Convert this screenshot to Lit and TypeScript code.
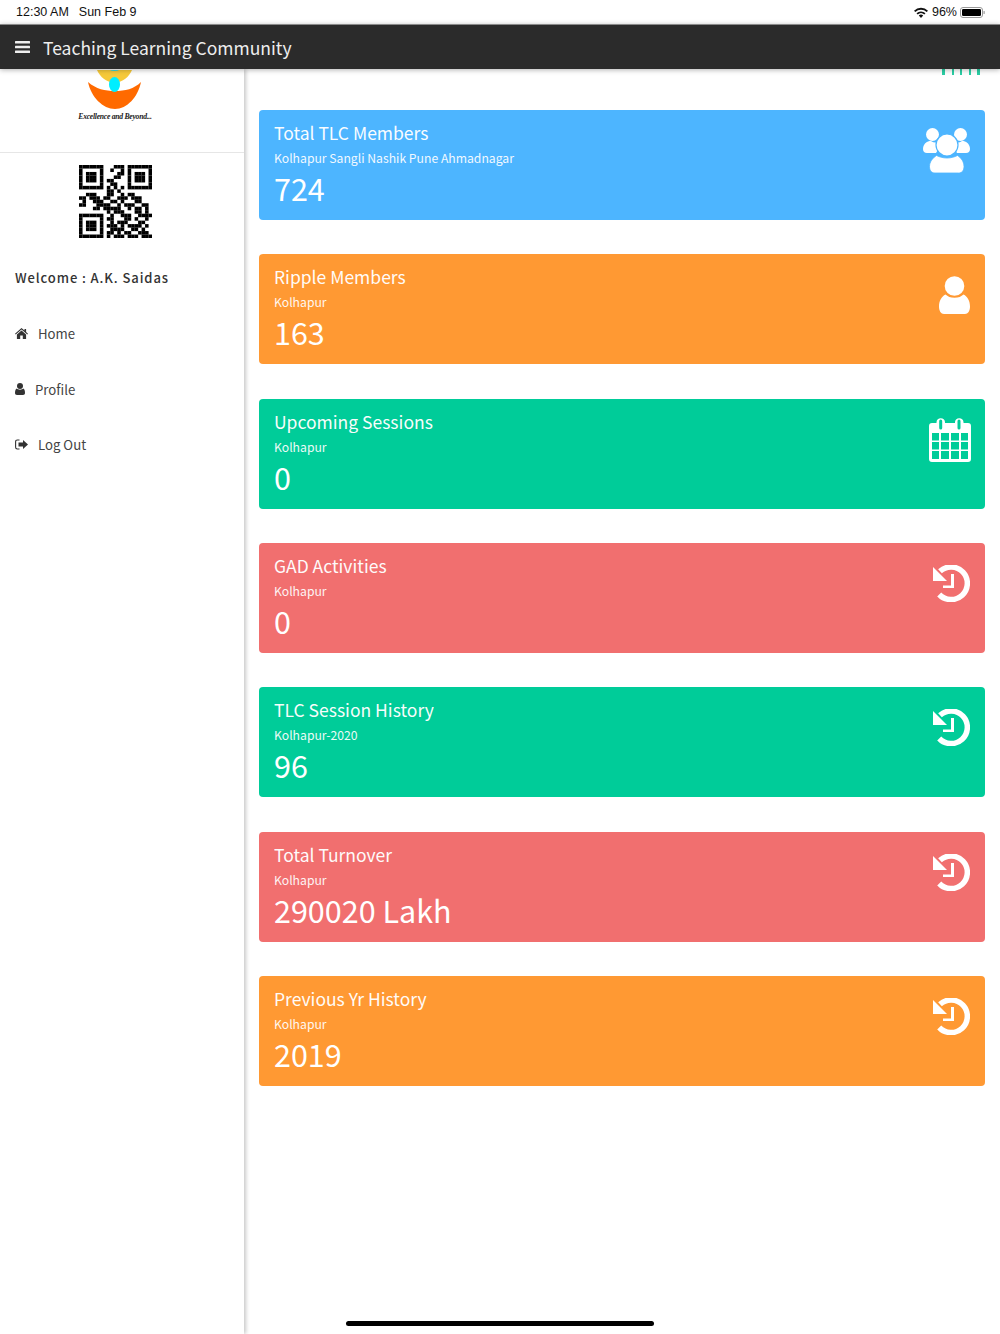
import { LitElement, html, css, svg } from "lit";
import { customElement } from "lit/decorators.js";

const QR = [
  "111111100011101111111",
  "100000100100101000001",
  "101110100001101011101",
  "101110100011001011101",
  "101110101100001011101",
  "100000100110001000001",
  "111111101010101111111",
  "000000001101000000000",
  "001110001100101100000",
  "110111011001110111000",
  "010011100110100011000",
  "110001111001011100110",
  "000011011111001011010",
  "000000001011100011010",
  "111111100100111001111",
  "100000101100011010010",
  "101110100101110001100",
  "101110101110101111010",
  "101110100111100110100",
  "100000101101011001110",
  "111111101011101110111",
];

const usersIcon = html`<svg class="icon" style="width:47px;height:45px" viewBox="0 0 47 45" fill="#fff">
  <circle cx="9.500" cy="6.500" r="6.500"/><circle cx="37.500" cy="6.500" r="6.500"/>
  <path d="M2 15.500c2-2 4-2.500 6-2.500 3 2 6 2 9 0l2 2-6 10H4c-2.500 0-4-1.500-4-4 0-2 .8-4 2-5.500zM45 15.500c-2-2-4-2.500-6-2.500-3 2-6 2-9 0l-2 2 6 10h9c2.500 0 4-1.500 4-4 0-2-.8-4-2-5.500z"/>
  <circle cx="24" cy="17" r="11" stroke="#4db5ff" stroke-width="1.200"/>
  <path d="M13.500 27.500c3 1.500 6.500 2.500 10.500 2.500s7.500-1 10.500-2.500c4 2.500 6.500 6.500 6.500 11 0 4-2 6.500-5.500 6.500H12c-3.500 0-5.500-2.500-5.500-6.500 0-4.500 3-8.500 7-11z" stroke="#4db5ff" stroke-width="0.800"/>
</svg>`;

const userIcon = html`<svg class="icon" style="width:31px;height:38px" viewBox="0 0 31 38" fill="#fff">
  <circle cx="15.500" cy="10" r="9.800"/>
  <path d="M6.500 18.500c2.200 2 5 3.300 9 3.300s6.800-1.300 9-3.300c4 2 6.500 6.500 6.500 12 0 4.500-2 7.500-5 7.500H5c-3 0-5-3-5-7.500 0-5.500 2.500-10 6.500-12z"/>
</svg>`;

const calendarIcon = html`<svg class="icon cal" style="width:42px;height:45px" viewBox="0 0 42 45">
  <path fill="#fff" fill-rule="evenodd" d="M3 6h4.500V5a4.300 4.300 0 0 1 8.500 0v1h10V5a4.300 4.300 0 0 1 8.500 0v1H39a3 3 0 0 1 3 3v33a3 3 0 0 1-3 3H3a3 3 0 0 1-3-3V9a3 3 0 0 1 3-3z
  M10.200 4v7a1.500 1.500 0 0 0 3 0V4a1.500 1.500 0 0 0-3 0zM28.500 4v7a1.500 1.500 0 0 0 3 0V4a1.500 1.500 0 0 0-3 0z
  M3 16v7.500h7V16zM12 16v7.500h8V16zM22 16v7.500h8V16zM32 16v7.500h7V16zM3 25v7.500h7V25zM12 25v7.500h8V25zM22 25v7.500h8V25zM32 25v7.500h7V25zM3 34v8h7v-8zM12 34v8h8v-8zM22 34v8h8v-8zM32 34v8h7v-8z"/>
</svg>`;

const historyIcon = html`<svg class="icon" style="width:38px;height:37px" viewBox="0 0 38 37">
  <path fill="none" stroke="#fff" stroke-width="5.500" d="M8 6.300A16.300 16.300 0 1 1 7.200 29.500"/>
  <path fill="#fff" d="M1 2V16H15z"/>
  <path fill="#fff" d="M19 9h3v14H11v-2.500h8z"/>
</svg>`;

const CARDS = [
  { t: "Total TLC Members", s: "Kolhapur Sangli Nashik Pune Ahmadnagar", v: "724", c: "blue", i: usersIcon, p: "top18" },
  { t: "Ripple Members", s: "Kolhapur", v: "163", c: "orange", i: userIcon, p: "top22" },
  { t: "Upcoming Sessions", s: "Kolhapur", v: "0", c: "green", i: calendarIcon, p: "top18" },
  { t: "GAD Activities", s: "Kolhapur", v: "0", c: "red", i: historyIcon, p: "top22" },
  { t: "TLC Session History", s: "Kolhapur-2020", v: "96", c: "green", i: historyIcon, p: "top22" },
  { t: "Total Turnover", s: "Kolhapur", v: "290020 Lakh", c: "red", i: historyIcon, p: "top22" },
  { t: "Previous Yr History", s: "Kolhapur", v: "2019", c: "orange", i: historyIcon, p: "top22" },
];

@customElement("app-root")
export class AppRoot extends LitElement {
  static styles = css`
    :host {
      display: block;
      position: relative;
      height: 1334px;
      overflow: hidden;
      background: #fff;
      font-family: "Noto Sans CJK SC", "Noto Sans CJK JP", sans-serif;
      color: #333;
    }
    .status {
      height: 24px;
      display: flex;
      align-items: center;
      padding: 0 15px 0 16px;
      font: 12.500px/24px "Liberation Sans", Arial, sans-serif;
      color: #111;
      background: #fff;
    }
    .status .date { margin-left: 10px; }
    .status .right { margin-left: auto; display: flex; align-items: center; gap: 3px; }
    .status .wifi { margin-right: 1px; }
    .battery { display: flex; align-items: center; }
    .header {
      position: relative;
      z-index: 2;
      height: 45px;
      box-sizing: border-box;
      border-top: 1px solid #8a8a8a;
      background: #2b2b2b;
      color: #eee;
      display: flex;
      align-items: center;
      padding-left: 15px;
      gap: 13px;
      font-size: 17.500px;
      box-shadow: 0 1px 5px rgba(0, 0, 0, 0.3);
    }
    .burger { display: block; }
    .body { display: flex; height: 1265px; }
    .side {
      width: 244px;
      flex: none;
      position: relative;
      z-index: 1;
      background: #fff;
      box-shadow: 2px 0 4px rgba(0, 0, 0, 0.22);
    }
    .logo {
      height: 84px;
      box-sizing: border-box;
      border-bottom: 1px solid #e6e6e6;
      padding: 1px 14px 0 0;
      display: flex;
      flex-direction: column;
      align-items: center;
    }
    .logo svg { display: block; }
    .tag {
      font: italic bold 7.700px/12px "Liberation Serif", serif;
      color: #222;
      letter-spacing: -0.28px;
      margin-top: 1px;
    }
    .qr { display: flex; justify-content: flex-start; padding: 12px 0 0 79px; }
    .welcome {
      margin-top: 28px;
      padding-left: 15px;
      font-size: 13px;
      line-height: 24px;
      font-weight: 500;
      letter-spacing: 0.9px;
      color: #333;
    }
    .nav { margin-top: 16px; display: flex; flex-direction: column; }
    .item {
      height: 55.500px;
      display: flex;
      align-items: center;
      padding-left: 15px;
      font-size: 13.200px;
      color: #444;
    }
    .item svg { flex: none; display: block; }
    .main { flex: 1; padding: 0 15px; }
    .ticks {
      height: 6px;
      margin-bottom: 35px;
      display: flex;
      justify-content: flex-end;
      gap: 6.500px;
      padding-right: 5px;
    }
    .ticks i { width: 2px; background: #2bcfa5; display: block; }
    .ticks i:first-child, .ticks i:last-child { width: 3px; }
    .cards { display: flex; flex-direction: column; gap: 34.350px; }
    .card {
      height: 110px;
      box-sizing: border-box;
      padding: 11px 15px;
      border-radius: 4px;
      color: #fff;
      position: relative;
      display: flex;
      justify-content: space-between;
    }
    .blue { background: #4db5ff; }
    .orange { background: #ff9933; }
    .green { background: #00cc99; }
    .red { background: #f16f6f; }
    .title { font-size: 17.500px; line-height: 24px; opacity: 0.97; }
    .sub { font-size: 12.200px; line-height: 26px; opacity: 0.92; }
    .value { font-size: 30.500px; line-height: 34px; }
    .iconbox { display: flex; justify-content: flex-end; align-items: flex-start; }
    .top18 { padding-top: 7px; }
    .top22 { padding-top: 11px; }
    .icon { display: block; }
    .cal { margin-right: -1px; }
    .home {
      position: absolute;
      left: 346px;
      top: 1321px;
      width: 308px;
      height: 5px;
      border-radius: 3px;
      background: #000;
      z-index: 3;
    }
  `;

  private qr() {
    const cells = [];
    for (let y = 0; y < QR.length; y++) {
      for (let x = 0; x < QR[y].length; x++) {
        if (QR[y][x] === "1") cells.push(svg`<rect x=${x} y=${y} width="1.02" height="1.02"/>`);
      }
    }
    return html`<svg width="73" height="73" viewBox="0 0 21 21" fill="#000">${cells}</svg>`;
  }

  render() {
    return html`
      <div class="status">
        <span>12:30 AM</span><span class="date">Sun Feb 9</span>
        <span class="right">
          <svg class="wifi" width="14" height="11" viewBox="0 0 14 11" fill="#111">
            <path d="M7 11 4.800 8.600a3.200 3.200 0 0 1 4.400 0zM3.700 7.500 2.500 6.200a6.600 6.600 0 0 1 9 0l-1.200 1.300a4.800 4.800 0 0 0-6.600 0zM1.300 5 0 3.700a10 10 0 0 1 14 0L12.700 5a8.300 8.300 0 0 0-11.400 0z"/>
          </svg>
          <span>96%</span>
          <span class="battery">
            <svg width="25" height="11" viewBox="0 0 25 11">
              <rect x="0.500" y="0.500" width="22" height="10" rx="2.500" fill="none" stroke="#999"/>
              <rect x="2" y="2" width="19" height="7" rx="1.200" fill="#000"/>
              <rect x="23.500" y="4" width="1.200" height="3" rx="0.500" fill="#999"/>
            </svg>
          </span>
        </span>
      </div>
      <div class="header">
        <svg class="burger" width="15" height="12" viewBox="0 0 15 12" fill="#eee">
          <rect width="15" height="2.400" y="0" rx="0.500"/><rect width="15" height="2.400" y="4.800" rx="0.500"/><rect width="15" height="2.400" y="9.600" rx="0.500"/>
        </svg>
        <span>Teaching Learning Community</span>
      </div>
      <div class="body">
        <aside class="side">
          <div class="logo">
            <svg width="56" height="40" viewBox="87 70 56 40">
              <path fill="#f6c93a" d="M97 70h35c-3 7-9 12-17.500 13C106 82 100 77 97 70z"/>
              <ellipse cx="114.500" cy="69" rx="5" ry="2" fill="#2fd9e6"/>
              <path fill="#ff6a00" d="M88 82c8 7 17 9 27 9s19-2 26-9c-3 15-14 27-26 27S91 97 88 82z"/>
              <ellipse cx="114.500" cy="84.500" rx="5.500" ry="7.500" fill="#00eeff"/>
            </svg>
            <span class="tag">Excellence and Beyond...</span>
          </div>
          <div class="qr">${this.qr()}</div>
          <div class="welcome">Welcome : A.K. Saidas</div>
          <nav class="nav">
            <div class="item">
              <svg width="13" height="11" viewBox="0 0 13 11" fill="#333" style="margin-right:10px">
                <path d="M6.500 0 9.500 2.600V1h1.600v3L13 5.700l-.7.800L6.500 1.500.7 6.500 0 5.700zM6.500 2.600l4.600 4V11H7.800V7.600H5.200V11H1.900V6.600z"/>
              </svg>
              <span>Home</span>
            </div>
            <div class="item">
              <svg width="10" height="12" viewBox="0 0 10 12" fill="#333" style="margin-right:10px">
                <circle cx="5" cy="3" r="3"/><path d="M1.500 5.500C3 7 7 7 8.500 5.500 9.500 6 10 8 10 10c0 1.300-.7 2-2 2H2c-1.300 0-2-.7-2-2 0-2 .5-4 1.500-4.500z"/>
              </svg>
              <span>Profile</span>
            </div>
            <div class="item">
              <svg width="13" height="11" viewBox="0 0 13 11" style="margin-right:10px">
                <path fill="none" stroke="#333" stroke-width="1.100" d="M4.500 1H2.300C1.300 1 .6 1.700.6 2.700v5.600c0 1 .7 1.700 1.700 1.700h2.200"/>
                <path fill="#333" d="M8 1 13 5.500 8 10V7.500H3.500v-4H8z"/>
              </svg>
              <span>Log Out</span>
            </div>
          </nav>
        </aside>
        <main class="main">
          <div class="ticks"><i></i><i></i><i></i><i></i><i></i></div>
          <div class="cards">
            ${CARDS.map(
              (c) => html`<div class="card ${c.c}">
                <div>
                  <div class="title">${c.t}</div>
                  <div class="sub">${c.s}</div>
                  <div class="value">${c.v}</div>
                </div>
                <div class="iconbox ${c.p}">${c.i}</div>
              </div>`
            )}
          </div>
        </main>
      </div>
      <div class="home"></div>
    `;
  }
}
